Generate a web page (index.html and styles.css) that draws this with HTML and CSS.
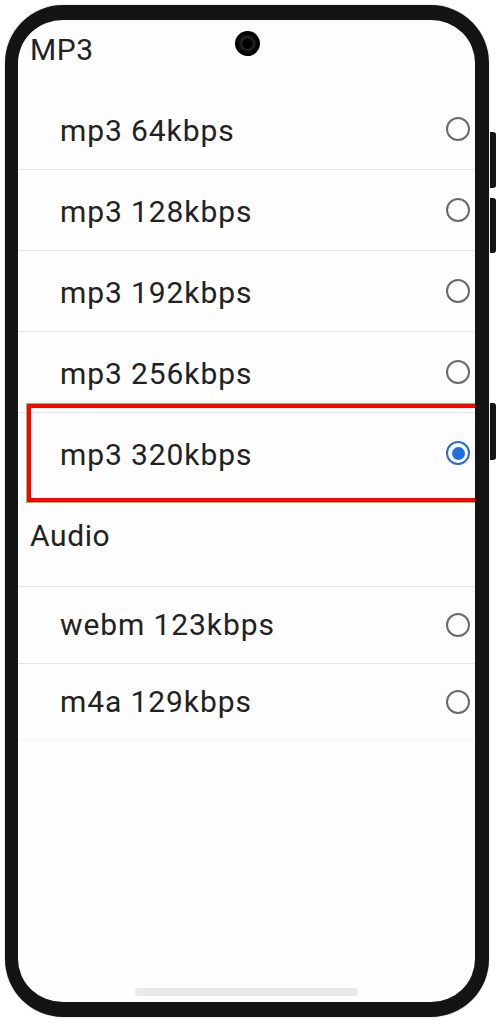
FILE: index.html
```html
<!DOCTYPE html>
<html lang="en">
<head>
  <meta charset="UTF-8" />
  <title>Audio Quality</title>
  <meta name="viewport" content="width=device-width, initial-scale=1.0"/>
  <link rel="stylesheet" href="styles.css">
</head>
<body>
  <div class="device">
    <span class="side-btn btn-power"></span>
    <span class="side-btn btn-vol-up"></span>
    <span class="side-btn btn-vol-down"></span>

    <div class="phone">
      <span class="camera"></span>

      <section class="group group-mp3">
        <h2 class="group-title">MP3</h2>
        <ul class="options">
          <li class="option"><span class="option-label">mp3 64kbps</span><span class="radio"></span></li>
          <li class="option"><span class="option-label">mp3 128kbps</span><span class="radio"></span></li>
          <li class="option"><span class="option-label">mp3 192kbps</span><span class="radio"></span></li>
          <li class="option"><span class="option-label">mp3 256kbps</span><span class="radio"></span></li>
          <li class="option is-selected"><span class="option-label">mp3 320kbps</span><span class="radio checked"></span></li>
        </ul>
      </section>

      <section class="group group-audio">
        <h2 class="group-title">Audio</h2>
        <ul class="options">
          <li class="option"><span class="option-label">webm 123kbps</span><span class="radio"></span></li>
          <li class="option"><span class="option-label">m4a 129kbps</span><span class="radio"></span></li>
        </ul>
      </section>

      <div class="home-bar"></div>
    </div>
  </div>
</body>
</html>
```

FILE: styles.css
```css
* {
  margin: 0;
  padding: 0;
  box-sizing: border-box;
}

body {
  font-family: Roboto, 'Noto Sans', Arial, sans-serif;
  background: #fff;
  color: #222;
}

.device {
  position: relative;
  width: 484px;
  height: 1012px;
  margin: 5px;
}

.phone {
  position: relative;
  height: 100%;
  display: flex;
  flex-direction: column;
  background: #fdfdfd;
  border-style: solid;
  border-color: #141414;
  border-width: 15px 14px 15px 13px;
  border-radius: 58px;
  overflow: hidden;
  box-shadow: 0 0 2px rgba(0, 0, 0, 0.25);
}

/* hardware buttons on the right edge */
.side-btn {
  position: absolute;
  left: 485px;
  width: 6px;
  background: #151515;
  border-radius: 0 3px 3px 0;
}

.btn-power { top: 127px; height: 56px; }
.btn-vol-up { top: 193px; height: 55px; }
.btn-vol-down { top: 398px; height: 57px; }

.camera {
  position: absolute;
  top: 11px;
  left: 217px;
  width: 25px;
  height: 25px;
  border-radius: 50%;
  background: radial-gradient(circle, #000 0 25%, #262626 35%, #000 55%);
  z-index: 2;
}

.group-title {
  font-size: 30px;
  font-weight: 400;
  line-height: 36px;
  letter-spacing: 0.6px;
  padding-left: 12px;
}

.group-mp3 .group-title {
  padding-top: 12px;
  padding-bottom: 21px;
}

.group-audio .group-title {
  padding-top: 25px;
  padding-bottom: 32px;
  border-bottom: 1px solid #e4e4e4;
}

.options {
  list-style: none;
}

.option {
  box-sizing: content-box;
  height: 80px;
  display: flex;
  align-items: center;
  justify-content: space-between;
  padding: 0 5px 0 42px;
  border-bottom: 1px solid #e4e4e4;
}

.group-mp3 .option:last-child {
  border-bottom: none;
}

.group-audio .option {
  height: 76px;
}

.group-audio .option:last-child {
  border-bottom-color: #f4f4f4;
}

.option-label {
  font-size: 30px;
  line-height: 36px;
  letter-spacing: 0.9px;
  margin-top: 4px;
}

.group-audio .option-label {
  margin-top: 0;
}

.radio {
  width: 24px;
  height: 24px;
  border: 2px solid #6a6a6a;
  border-radius: 50%;
  flex-shrink: 0;
}

.radio.checked {
  border: 2.5px solid #2b69cf;
  padding: 3.5px;
  background: #1e6fe2;
  background-clip: content-box;
}

/* red highlight frame round the chosen option */
.option.is-selected {
  position: relative;
}

.option.is-selected::after {
  content: '';
  position: absolute;
  top: -9px;
  bottom: -9px;
  left: 9px;
  right: -12px;
  border: 4px solid #f00;
  box-shadow: 0 0 0 1px #6ad66a;
}

.home-bar {
  margin-top: auto;
  margin-bottom: 6px;
  align-self: center;
  width: 223px;
  height: 8px;
  border-radius: 4px;
  background: #e9e9e9;
}
```
